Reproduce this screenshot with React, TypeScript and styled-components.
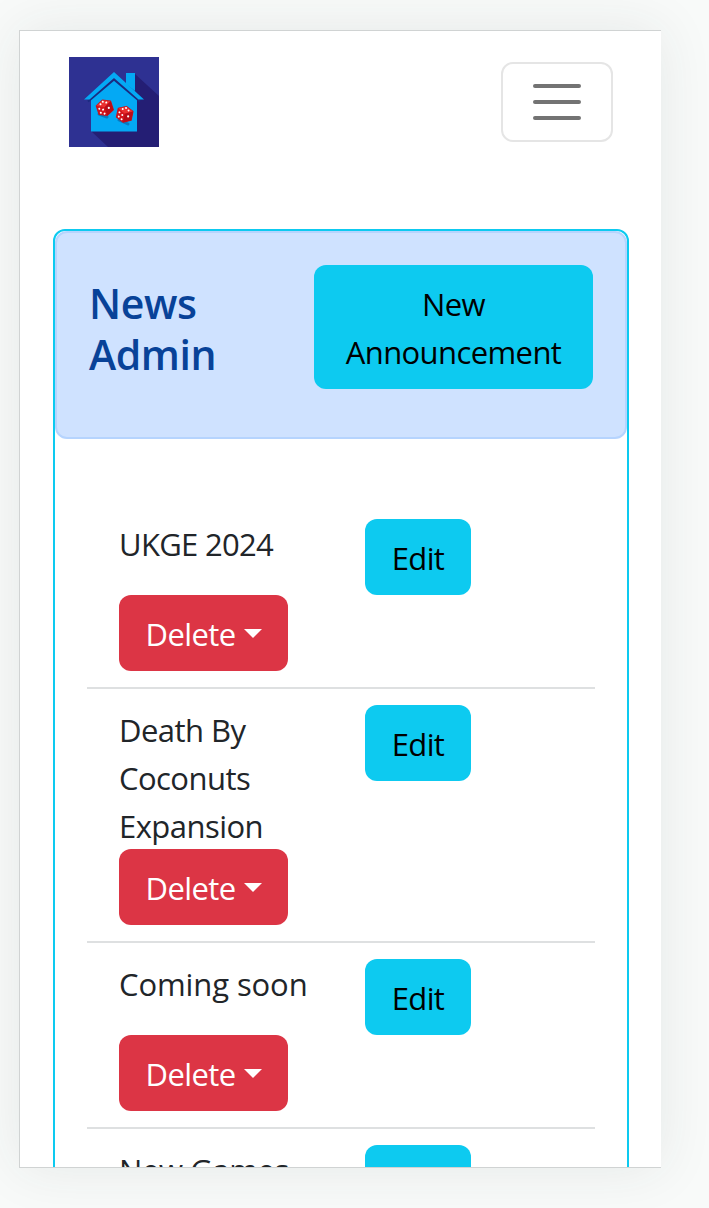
import React from "react";
import styled, { createGlobalStyle } from "styled-components";

const GlobalStyle = createGlobalStyle`
  *, *::before, *::after { box-sizing: border-box; }
  html, body { margin: 0; background: #f8faf9; }
  body {
    font-family: "Open Sans", "Noto Sans", sans-serif;
    font-size: 31px;
    line-height: 48px;
    color: #212529;
  }
`;

const Stage = styled.div`
  height: 1208px;
  padding: 30px 48px 40px 19px;
  overflow: hidden;
`;

const Screen = styled.main`
  height: 1138px;
  border: 1px solid #d0d3d3;
  border-right: 0;
  background: #fff;
  box-shadow: 0 0 52px rgba(40, 60, 50, 0.09);
  overflow: hidden;
`;

const Navbar = styled.header`
  display: flex;
  justify-content: space-between;
  align-items: flex-start;
  height: 198px;
  padding: 26px 48px 0 49px;
`;

const Logo = styled.svg`
  display: block;
  width: 90px;
  height: 90px;
`;

const Toggler = styled.button`
  display: flex;
  flex-direction: column;
  align-items: center;
  gap: 12px;
  width: 112px;
  height: 80px;
  margin-top: 5px;
  padding: 20px 0 0;
  border: 2px solid #e5e5e5;
  border-radius: 12px;
  background: #fff;
`;

const TogglerBar = styled.span`
  width: 48px;
  height: 4px;
  border-radius: 2px;
  background: #737373;
`;

const Card = styled.section`
  width: 576px;
  height: 1100px;
  margin-left: 33px;
  border: 2px solid #0dcaf0;
  border-radius: 12px;
`;

const Banner = styled.div`
  display: flex;
  justify-content: space-between;
  align-items: flex-start;
  height: 208px;
  padding: 32px 32px 0;
  border: 2px solid #b6d4fe;
  border-radius: 12px;
  background: #cfe2ff;
`;

const Title = styled.h1`
  width: 160px;
  margin: 13px 0 0;
  font-size: 41px;
  font-weight: 600;
  line-height: 51px;
  letter-spacing: -0.4px;
  color: #084298;
`;

const Button = styled.button<{ $variant: "info" | "danger"; $width: number }>`
  display: flex;
  align-items: center;
  justify-content: center;
  width: ${(p) => p.$width}px;
  padding: 15px 0 13px;
  border: 0;
  border-radius: 12px;
  background: ${(p) => (p.$variant === "info" ? "#0dcaf0" : "#dc3545")};
  color: ${(p) => (p.$variant === "info" ? "#000" : "#fff")};
  font: inherit;
  letter-spacing: -0.6px;
`;

const Caret = styled.span`
  margin: -1px 0 0 8px;
  border-top: 9px solid currentColor;
  border-left: 9px solid transparent;
  border-right: 9px solid transparent;
`;

const List = styled.div`
  margin: 64px 32px 0;
`;

const Row = styled.div`
  display: grid;
  grid-template-columns: 246px 1fr;
  grid-template-rows: minmax(76px, auto) 76px;
  align-items: start;
  padding: 16px 32px;
  border-bottom: 2px solid #dee0e1;
`;

const Name = styled.div<{ $spacing: number }>`
  width: 214px;
  margin: 1px 0 -1px;
  letter-spacing: ${(p) => p.$spacing}px;
`;

const Die = ({ x, y, turn }: { x: number; y: number; turn: number }) => (
  <g transform={`translate(${x} ${y}) rotate(${turn})`}>
    <path
      d="M0-8 7.5-4.5V4.5L0 8-7.5 4.5V-4.5Z"
      fill="#d4141c"
      stroke="#c4141f"
      strokeWidth="1.2"
      strokeLinejoin="round"
    />
    <path d="M0-8 7.5-4.5 0-.5-7.5-4.5Z" fill="#ea3030" />
    <path d="M0-.5 7.5-4.5V4.5L0 8Z" fill="#b90c18" />
    <g fill="#fff">
      <circle cx="-3" cy="-4.7" r="1" />
      <circle cx="0" cy="-6.4" r="1" />
      <circle cx="3" cy="-4.5" r="1" />
      <circle cx="-5.5" cy="-.8" r="1" />
      <circle cx="-2.2" cy="1.2" r="1" />
      <circle cx="-5.3" cy="3.5" r="1" />
      <circle cx="-2" cy="5.5" r="1" />
      <circle cx="3.8" cy="1.3" r="1.1" />
    </g>
  </g>
);

const HouseLogo = () => (
  <Logo viewBox="0 0 90 90" role="img">
    <rect width="90" height="90" fill="#2e3192" />
    <path d="M66 17 90 39V90H39L22 74Z" fill="#241e74" />
    <path d="M22 41.5 45 23 68 41.5V74.5H22Z" fill="#04a9f4" />
    <path d="M19 44.5 45 22.5 71 44.5" fill="none" stroke="#1b2b80" strokeWidth="2.2" />
    <path d="M57 16H66V34L57 27Z" fill="#04a9f4" />
    <path d="M45 15 75 42.5H69.5L45 21 20.5 42.5H15Z" fill="#04a9f4" />
    <path d="M30 57 38 60M50 63 59 67" stroke="#087bc0" strokeWidth="3" strokeLinecap="round" />
    <Die x={35.8} y={50.8} turn={-18} />
    <Die x={55.7} y={57.3} turn={12} />
  </Logo>
);

const announcements = [
  { name: "UKGE 2024", spacing: -0.7 },
  { name: "Death By Coconuts Expansion", spacing: -0.55 },
  { name: "Coming soon", spacing: -0.1 },
  { name: "New Games", spacing: -0.4 },
];

export default function App() {
  return (
    <>
      <GlobalStyle />
      <Stage>
        <Screen>
          <Navbar>
            <HouseLogo />
            <Toggler aria-label="Toggle navigation">
              <TogglerBar />
              <TogglerBar />
              <TogglerBar />
            </Toggler>
          </Navbar>
          <Card>
            <Banner>
              <Title>News Admin</Title>
              <Button $variant="info" $width={279}>
                New
                <br />
                Announcement
              </Button>
            </Banner>
            <List>
              {announcements.map((item) => (
                <Row key={item.name}>
                  <Name $spacing={item.spacing}>{item.name}</Name>
                  <Button $variant="info" $width={106}>
                    Edit
                  </Button>
                  <Button $variant="danger" $width={169}>
                    Delete
                    <Caret />
                  </Button>
                </Row>
              ))}
            </List>
          </Card>
        </Screen>
      </Stage>
    </>
  );
}
